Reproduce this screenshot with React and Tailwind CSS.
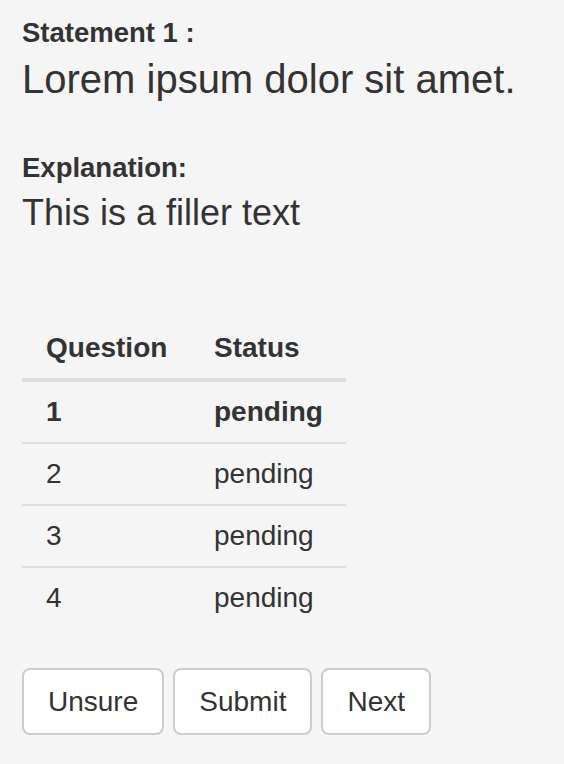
import React from 'react';

const rows = [
  { id: 1, status: 'pending', current: true },
  { id: 2, status: 'pending' },
  { id: 3, status: 'pending' },
  { id: 4, status: 'pending' },
];

const buttons = ['Unsure', 'Submit', 'Next'];

const App = () => {
  return (
    <div className="min-h-[764px] bg-[#f5f5f5] px-[22px] pt-[18px] pb-8 text-[#333] font-['Liberation_Sans',Arial,sans-serif]">
      <p className="text-[27.5px] leading-[30px] font-bold">Statement 1 :</p>
      <p className="mt-[9px] text-[40px] leading-[44px]">Lorem ipsum dolor sit amet.</p>

      <p className="mt-[52px] text-[27.5px] leading-[30px] font-bold">Explanation:</p>
      <p className="mt-[10px] text-[36px] leading-[40px]">This is a filler text</p>

      <table className="mt-[85px] w-[324px] table-fixed border-separate border-spacing-0 text-left">
        <thead>
          <tr>
            <th className="w-[167px] h-[64px] px-6 border-b-4 border-[#ddd] text-[28px] font-bold align-middle whitespace-nowrap">
              Question
            </th>
            <th className="h-[64px] pl-[25px] pr-6 border-b-4 border-[#ddd] text-[28px] font-bold align-middle">
              Status
            </th>
          </tr>
        </thead>
        <tbody>
          {rows.map((row, i) => {
            const last = i === rows.length - 1;
            const cell = `px-6 text-[28px] align-middle ${
              last ? 'h-[60px]' : 'h-[62px] border-b-2 border-[#ddd]'
            } ${row.current ? 'font-bold' : 'font-normal'}`;
            return (
              <tr key={row.id}>
                <td className={cell}>{row.id}</td>
                <td className={`${cell} pl-[25px]`}>{row.status}</td>
              </tr>
            );
          })}
        </tbody>
      </table>

      <div className="mt-10 flex gap-[9px]">
        {buttons.map(label => (
          <button
            key={label}
            className="h-[67px] px-6 bg-white border-2 border-[#ccc] rounded-[8px] text-[28px] leading-none text-[#333]"
          >
            {label}
          </button>
        ))}
      </div>
    </div>
  );
};

export default App;
